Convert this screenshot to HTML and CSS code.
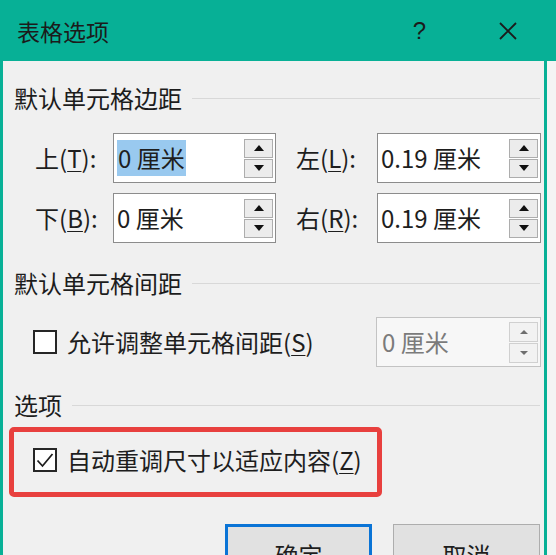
FILE: index.html
```html
<!DOCTYPE html>
<html lang="zh-CN">
<head>
<meta charset="utf-8">
<title>表格选项</title>
<link rel="stylesheet" href="styles.css">
</head>
<body>
<div class="window">
  <div class="titlebar">
    <span class="title">表格选项</span>
    <span class="help">?</span>
    <svg class="close" width="20" height="20" viewBox="0 0 20 20" aria-hidden="true">
      <path d="M2 2 L18 18 M18 2 L2 18" stroke="#1b1b1b" stroke-width="1.8" fill="none"/>
    </svg>
  </div>
  <div class="body">
    <div class="group-head"><span>默认单元格边距</span></div>
    <div class="margins">
      <span class="lbl">上(<u>T</u>):</span>
      <div class="spin"><span class="val"><span class="sel">0 厘米</span></span><span class="arrows"><span class="up"></span><span class="down"></span></span></div>
      <span></span>
      <span class="lbl">左(<u>L</u>):</span>
      <div class="spin"><span class="val">0.19 厘米</span><span class="arrows"><span class="up"></span><span class="down"></span></span></div>

      <span class="lbl">下(<u>B</u>):</span>
      <div class="spin"><span class="val">0 厘米</span><span class="arrows"><span class="up"></span><span class="down"></span></span></div>
      <span></span>
      <span class="lbl">右(<u>R</u>):</span>
      <div class="spin"><span class="val">0.19 厘米</span><span class="arrows"><span class="up"></span><span class="down"></span></span></div>
    </div>

    <div class="group-head second"><span>默认单元格间距</span></div>
    <div class="option-row">
      <span class="cb"></span>
      <span class="opt-text">允许调整单元格间距(<u>S</u>)</span>
      <div class="spin disabled"><span class="val">0 厘米</span><span class="arrows"><span class="up"></span><span class="down"></span></span></div>
    </div>

    <div class="group-head third"><span>选项</span></div>
    <div class="highlight">
      <span class="cb">
        <svg width="20" height="20" viewBox="0 0 20 20" aria-hidden="true"><path d="M2.5 10.5 L7.5 16 L17.5 4" stroke="#1e1e1e" stroke-width="1.8" fill="none"/></svg>
      </span>
      <span class="opt-text">自动重调尺寸以适应内容(<u>Z</u>)</span>
    </div>

    <div class="buttons">
      <div class="btn default">确定</div>
      <div class="btn">取消</div>
    </div>
  </div>
</div>
</body>
</html>
```
FILE: styles.css
```css
* { box-sizing: border-box; }

body {
  margin: 0;
  width: 556px;
  height: 555px;
  overflow: hidden;
  background: #f4f4f4;
  font-family: "Noto Sans CJK SC", "Noto Sans", sans-serif;
  color: #1e1e1e;
}

.titlebar {
  height: 61px;
  background: #07b096;
  display: flex;
  align-items: center;
  padding-left: 17px;
}

.title {
  font-size: 23px;
  line-height: 30px;
  color: #1b1b1b;
}

.help {
  margin-left: auto;
  font-size: 24px;
  line-height: 30px;
  color: #1b1b1b;
  font-family: "Liberation Sans", sans-serif;
}

.close {
  margin-left: 72px;
  margin-right: 38px;
}

.body {
  width: 547px;
  height: 520px;
  background: #f0f0f0;
  border-left: 3px solid #07b096;
  border-right: 3px solid #07b096;
  padding: 22px 3px 0 11px;
}

.group-head {
  display: flex;
  align-items: center;
  gap: 10px;
  height: 30px;
  font-size: 24px;
  line-height: 30px;
  color: #1c1c1c;
}

.group-head::after {
  content: "";
  flex: 1;
  height: 1px;
  background: #d8d8d8;
  margin-right: 1px;
}

.group-head.second { margin-top: 25px; }
.group-head.third { margin-top: 23px; }

.margins {
  margin-top: 20px;
  margin-left: 21px;
  display: grid;
  grid-template-columns: 78px 163px 20px 81px 164px;
  grid-template-rows: 50px 50px;
  row-gap: 10px;
  align-items: center;
}

.lbl {
  font-size: 24px;
  line-height: 30px;
  color: #1e1e1e;
}

u { text-underline-offset: 3px; text-decoration-thickness: 1px; }

.spin {
  height: 50px;
  display: flex;
  align-items: center;
  background: #ffffff;
  border: 1px solid #8c8c8c;
  padding-left: 3px;
}

.val {
  flex: 1;
  font-size: 24px;
  line-height: 36px;
  color: #1e1e1e;
  white-space: nowrap;
}

.sel {
  background: #99c9ef;
  display: inline-block;
  padding: 0 1px;
}

.arrows {
  width: 29px;
  margin-right: 2px;
  display: flex;
  flex-direction: column;
  gap: 1px;
}

.up, .down {
  height: 19px;
  background: #ececec;
  border: 1px solid #adadad;
  display: flex;
  align-items: center;
  justify-content: center;
}

.up::before {
  content: "";
  border-left: 5px solid transparent;
  border-right: 5px solid transparent;
  border-bottom: 6px solid #111;
}

.down::before {
  content: "";
  border-left: 5px solid transparent;
  border-right: 5px solid transparent;
  border-top: 6px solid #111;
}

.option-row {
  margin-top: 19px;
  height: 50px;
  display: flex;
  align-items: center;
  padding-left: 19px;
}

.cb {
  flex: none;
  width: 24px;
  height: 24px;
  border: 2px solid #262626;
  background: #ffffff;
  display: flex;
  align-items: center;
  justify-content: center;
}

.opt-text {
  margin-left: 10px;
  font-size: 24px;
  line-height: 30px;
  color: #1e1e1e;
  white-space: nowrap;
}

.spin.disabled {
  margin-left: auto;
  width: 165px;
  background: #f7f7f7;
  border-color: #c3c3c3;
  padding-left: 5px;
}

.spin.disabled .val { color: #7b7b7b; }

.spin.disabled .up,
.spin.disabled .down {
  height: 20px;
  background: #f2f2f2;
  border-color: #d0d0d0;
}

.spin.disabled .up::before {
  border-left-width: 4px;
  border-right-width: 4px;
  border-bottom: 4px solid #6e6e6e;
}

.spin.disabled .down::before {
  border-left-width: 4px;
  border-right-width: 4px;
  border-top: 4px solid #6e6e6e;
}

.highlight {
  margin-top: 7px;
  margin-left: -5px;
  width: 373px;
  height: 70px;
  border: 5px solid #e8403e;
  border-radius: 5px;
  display: flex;
  align-items: center;
  padding-left: 19px;
  padding-bottom: 4px;
}

.buttons {
  margin-top: 27px;
  display: flex;
  justify-content: flex-end;
  gap: 21px;
  padding-right: 1px;
}

.btn {
  width: 147px;
  height: 60px;
  background: #e1e1e1;
  border: 1px solid #adadad;
  display: flex;
  align-items: center;
  justify-content: center;
  font-size: 24px;
  color: #1e1e1e;
}

.btn.default {
  border: 3px solid #0a74d6;
}
```
